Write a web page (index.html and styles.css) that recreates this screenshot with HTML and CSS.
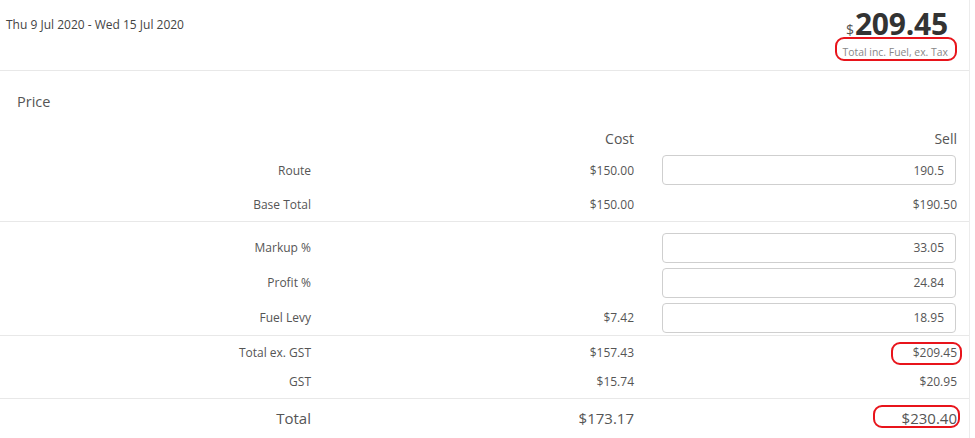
FILE: index.html
```html
<!DOCTYPE html>
<html>
<head>
<meta charset="utf-8">
<link rel="stylesheet" href="styles.css">
</head>
<body>
<div class="panel">
  <div class="header">
    <div class="date">Thu 9 Jul 2020 - Wed 15 Jul 2020</div>
    <div class="summary">
      <div class="amount"><span class="cur">$</span>209.45</div>
      <div class="caption">Total inc. Fuel, ex. Tax</div>
    </div>
  </div>
  <div class="title">Price</div>
  <div class="sec sec1">
    <div class="row head"><div></div><div class="cost">Cost</div><div></div><div class="sell">Sell</div></div>
    <div class="row r34"><div class="label">Route</div><div class="cost">$150.00</div><div></div><div class="sell"><input class="box" value="190.5"></div></div>
    <div class="row r34"><div class="label">Base Total</div><div class="cost">$150.00</div><div></div><div class="sell">$190.50</div></div>
  </div>
  <div class="sec sec2">
    <div class="row r35"><div class="label">Markup %</div><div class="cost"></div><div></div><div class="sell"><input class="box" value="33.05"></div></div>
    <div class="row r35"><div class="label">Profit %</div><div class="cost"></div><div></div><div class="sell"><input class="box" value="24.84"></div></div>
    <div class="row r35"><div class="label">Fuel Levy</div><div class="cost">$7.42</div><div></div><div class="sell"><input class="box" value="18.95"></div></div>
  </div>
  <div class="sec sec3">
    <div class="row r29"><div class="label">Total ex. GST</div><div class="cost">$157.43</div><div></div><div class="sell">$209.45</div></div>
    <div class="row r29"><div class="label">GST</div><div class="cost">$15.74</div><div></div><div class="sell">$20.95</div></div>
  </div>
  <div class="sec sec4">
    <div class="row total"><div class="label">Total</div><div class="cost">$173.17</div><div></div><div class="sell">$230.40</div></div>
  </div>
</div>
<div class="mark mark-caption"></div>
<div class="mark mark-exgst"></div>
<div class="mark mark-total"></div>
</body>
</html>
```
FILE: styles.css
```css
html, body {
  margin: 0;
  padding: 0;
  background: #fff;
}
body {
  position: relative;
  width: 975px;
  height: 438px;
  overflow: hidden;
  font-family: "Open Sans", "Liberation Sans", sans-serif;
  color: #555;
}
.panel {
  width: 969px;
  height: 438px;
  border-right: 1px solid #ececec;
}
.header {
  height: 70px;
  border-bottom: 1px solid #e8e8e8;
  display: flex;
  justify-content: space-between;
  align-items: flex-start;
}
.date {
  padding: 17px 0 0 6px;
  font-size: 12px;
  line-height: 16px;
  color: #444;
}
.summary {
  padding: 9px 21px 0 0;
  text-align: right;
}
.amount {
  font-size: 30px;
  line-height: 30px;
  font-weight: 700;
  color: #333;
  letter-spacing: -0.2px;
}
.cur {
  font-size: 14px;
  font-weight: 400;
  color: #555;
  margin-right: 1px;
}
.caption {
  margin-top: 1px;
  font-size: 10.4px;
  line-height: 12px;
  color: #888;
}
.title {
  padding: 21px 0 0 17px;
  font-size: 14.5px;
  line-height: 20px;
  color: #555;
}
.row {
  display: grid;
  grid-template-columns: 311px 323px 28px 295px;
  align-items: center;
  font-size: 12px;
}
.label, .cost, .sell {
  text-align: right;
}
.head {
  margin-top: 16px;
  height: 20px;
  margin-bottom: 5px;
  font-size: 14px;
}
.r34 { height: 34px; }
.r35 { height: 35px; }
.r29 { height: 29px; }
.sec2 {
  border-top: 1px solid #e8e8e8;
  padding-top: 8px;
}
.sec3 {
  border-top: 1px solid #e8e8e8;
  padding: 2px 0 2px;
}
.sec4 {
  border-top: 1px solid #e8e8e8;
}
.total {
  height: 37px;
  font-size: 15px;
}
.box {
  display: block;
  width: 294px;
  height: 30px;
  box-sizing: border-box;
  margin: 0;
  border: 1px solid #cfcfcf;
  border-radius: 4px;
  padding: 0 11px 0 0;
  text-align: right;
  font-family: "Open Sans", "Liberation Sans", sans-serif;
  font-size: 12px;
  color: #555;
  background: #fff;
  outline: none;
}
.mark {
  position: absolute;
  border: 2px solid #e8141b;
  border-radius: 9px;
  box-sizing: border-box;
}
.mark-caption {
  left: 835px;
  top: 37px;
  width: 122px;
  height: 24px;
}
.mark-exgst {
  left: 891px;
  top: 342px;
  width: 71px;
  height: 23px;
}
.mark-total {
  left: 873px;
  top: 405px;
  width: 87px;
  height: 23px;
}
```
